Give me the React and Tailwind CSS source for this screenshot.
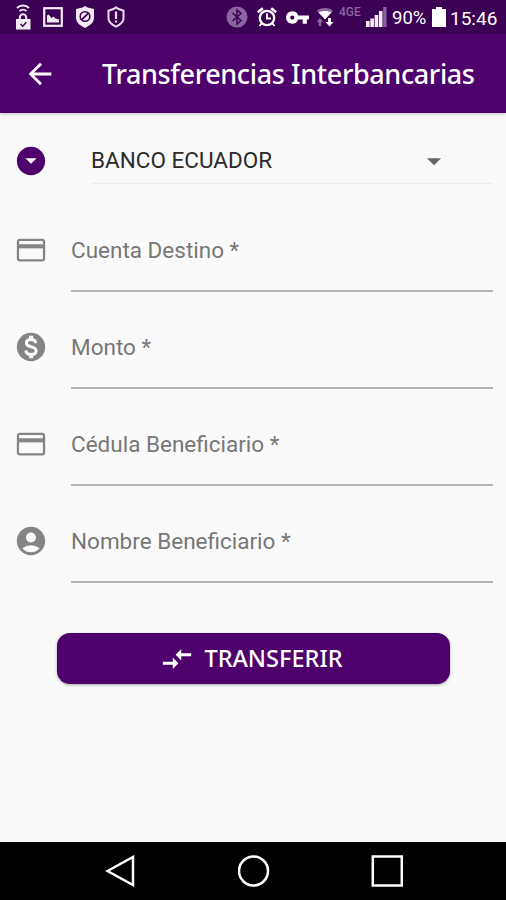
import { useState } from 'react';
import {
  MdAccountCircle,
  MdArrowBack,
  MdArrowDropDown,
  MdArrowDropDownCircle,
  MdCompareArrows,
  MdVpnKey,
} from 'react-icons/md';

const CardIcon = ({ className }) => (
  <svg className={className} viewBox="0 0 24 24" fill="none" stroke="currentColor">
    <rect x="2.800" y="4.800" width="18.400" height="14.500" rx="1.300" strokeWidth="1.600" />
    <path d="M3 9.400h18" strokeWidth="2.900" />
  </svg>
);

const MoneyIcon = ({ className }) => (
  <svg className={className} viewBox="0 0 24 24">
    <circle cx="12" cy="12" r="10" fill="currentColor" />
    <g fill="none" stroke="#fafafa">
      <path d="M15.400 9.300C15.200 7.500 14 6.700 12.100 6.700c-2 0-3.300 1-3.300 2.500 0 1.600 1.200 2.200 3.300 2.700s3.500 1.200 3.500 2.900c0 1.600-1.400 2.500-3.500 2.500-2.200 0-3.500-1-3.700-2.800" strokeWidth="2.200" />
      <path d="M12.100 4v2.500M12.100 17.500V20" strokeWidth="2.900" />
    </g>
  </svg>
);

const fields = [
  { name: 'cuenta', label: 'Cuenta Destino *', icon: CardIcon },
  { name: 'monto', label: 'Monto *', icon: MoneyIcon },
  { name: 'cedula', label: 'Cédula Beneficiario *', icon: CardIcon },
  { name: 'nombre', label: 'Nombre Beneficiario *', icon: MdAccountCircle },
];

const LockWifiIcon = () => (
  <svg width="16" height="26" viewBox="0 0 16 26" fill="none" stroke="#f1eaf5">
    <path d="M2 4C5 .6 11 .6 14 4M4.500 7.200c2-2 5-2 7 0" strokeWidth="1.900" />
    <path d="M4.800 16v-2.500a3.200 3.200 0 0 1 6.400 0V16" strokeWidth="2" />
    <rect x="1" y="15" width="14.500" height="10.500" fill="#f1eaf5" stroke="none" />
    <path d="M5.500 20l2.300 2.300 3.500-4" stroke="#3c0054" strokeWidth="1.400" />
  </svg>
);

const ImageIcon = () => (
  <svg width="20" height="20" viewBox="0 0 20 20">
    <rect x="1.200" y="1.200" width="17.600" height="17.600" fill="none" stroke="#f1eaf5" strokeWidth="2.200" />
    <path d="M4 15.500V8.500l1.500-1 3 3.500 2-1.500 2 2 3.500 1v3z" fill="#f1eaf5" />
  </svg>
);

const ShieldBlockIcon = () => (
  <svg width="20" height="22" viewBox="0 0 20 22">
    <path d="M10 0l2.500 1.600L19 3v9c0 4.500-4 7.500-9 10-5-2.500-9-5.500-9-10V3l6.500-1.400z" fill="#f1eaf5" />
    <circle cx="10" cy="10.500" r="4.800" fill="none" stroke="#3c0054" strokeWidth="1.600" />
    <path d="M6.800 13.700l6.400-6.400" stroke="#3c0054" strokeWidth="1.800" />
  </svg>
);

const ShieldAlertIcon = () => (
  <svg width="18" height="22" viewBox="0 0 18 22" fill="none" stroke="#e6dcec">
    <path d="M9 1.300l2 1.500 5.500 2v7.700c0 3.500-3 6-7.500 8.200-4.500-2.200-7.500-4.700-7.500-8.200V4.800l5.500-2z" strokeWidth="2" />
    <path d="M9 5.500v7.500M9 14.500v2" strokeWidth="2.200" />
  </svg>
);

const BluetoothIcon = () => (
  <svg width="22" height="22" viewBox="0 0 22 22">
    <circle cx="11" cy="11" r="10.500" fill="#8a65a0" />
    <path d="M6.500 7l8.500 7.500-4 3.500V4l4 3.500L6.500 15" fill="none" stroke="#3c0054" strokeWidth="1.500" />
  </svg>
);

const AlarmIcon = () => (
  <svg width="20" height="20" viewBox="0 0 20 20" fill="none" stroke="#fff">
    <circle cx="10" cy="11" r="7.200" strokeWidth="2.300" />
    <path d="M.8 5.200l5-4M19.200 5.200l-5-4" strokeWidth="2.600" />
    <path d="M10 6.500V11.500h4M4.500 16.500L2.500 19M15.500 16.500l2 2.500" strokeWidth="2" />
  </svg>
);

const WifiDataIcon = () => (
  <svg width="18" height="20" viewBox="0 0 18 20">
    <path d="M.8 3.500C6 .2 12 .2 17.200 3.500L15 6C11 4 7 4 3 6z" fill="#8a65a0" />
    <path d="M2.500 5.500c4-2 9-2 13 0L9 12.500z" fill="#fff" />
    <path d="M4 11l3.500 4H5.200v4H2.800v-4H.5z" fill="#8a65a0" />
    <path d="M13.500 19.500l-4-4.500h2.500v-4h3v4h2.500z" fill="#fff" />
  </svg>
);

const SignalIcon = () => (
  <svg width="21" height="20" viewBox="0 0 21 20" fill="#f1eaf5">
    <rect x="0" y="14" width="3.600" height="6" />
    <rect x="4.300" y="11.500" width="3.600" height="8.500" />
    <rect x="8.600" y="8" width="3.600" height="12" />
    <rect x="12.900" y="4" width="3.600" height="16" />
    <rect x="17.200" y="0" width="3.300" height="20" fill="#8a65a0" />
  </svg>
);

const BatteryIcon = () => (
  <svg width="14" height="20" viewBox="0 0 14 20" fill="#fff">
    <path d="M4 0h6v2h4v18H0V2h4z" />
  </svg>
);

function StatusBar() {
  return (
    <div className="flex h-[34px] shrink-0 items-center justify-between bg-[#3c0054] pl-[15px] pr-[8px] text-white">
      <div className="flex items-center gap-[12px]">
        <LockWifiIcon />
        <ImageIcon />
        <ShieldBlockIcon />
        <ShieldAlertIcon />
      </div>
      <div className="flex items-center whitespace-nowrap">
        <BluetoothIcon />
        <span className="ml-[9px]"><AlarmIcon /></span>
        <MdVpnKey className="ml-[8px] size-[25px]" />
        <span className="ml-[6px]"><WifiDataIcon /></span>
        <span className="mb-[11px] ml-[5px] w-[24px] text-[12px] leading-none font-medium text-[#8a65a0]">4GE</span>
        <span className="ml-[3px]"><SignalIcon /></span>
        <span className="mt-[3px] ml-[5px] w-[35px] text-[18.500px] leading-none">90%</span>
        <span className="ml-[5px]"><BatteryIcon /></span>
        <span className="mt-[2px] ml-[4px] w-[48px] text-[19px] leading-none">15:46</span>
      </div>
    </div>
  );
}

function AppBar() {
  return (
    <header className="z-10 flex h-[79px] shrink-0 items-center bg-[#4e006c] pl-[23px] text-white shadow-[0_1px_4px_rgba(0,0,0,0.22)]">
      <button type="button" aria-label="Volver">
        <MdArrowBack className="size-[34px]" />
      </button>
      <h1 className="ml-[45px] mt-[2px] whitespace-nowrap font-['Noto_Sans',sans-serif] text-[27px] font-medium tracking-[-0.38px]">
        Transferencias Interbancarias
      </h1>
    </header>
  );
}

function Field({ field, value, onChange }) {
  const Icon = field.icon;

  return (
    <label className="mb-[32px] flex h-[65px] pl-[14px]">
      <Icon className="mt-[6px] size-[34px] shrink-0 text-[#858585]" />
      <input
        name={field.name}
        value={value}
        onChange={onChange}
        placeholder={field.label}
        className="ml-[23px] min-w-0 flex-1 border-b-2 border-[#b4b4b4] pb-[16px] text-[22.500px] text-[#333] outline-none placeholder:text-[#777]"
      />
    </label>
  );
}

function NavBar() {
  return (
    <nav className="flex h-[58px] shrink-0 items-center bg-black pl-[105px]">
      <svg width="32" height="32" viewBox="0 0 32 32" fill="none" stroke="#fff" strokeWidth="2.500">
        <path d="M2.500 16L28 2v28z" />
      </svg>
      <svg className="ml-[101px]" width="32" height="32" viewBox="0 0 32 32" fill="none" stroke="#fff" strokeWidth="2.500">
        <circle cx="15.500" cy="16" r="14.500" />
      </svg>
      <svg className="ml-[101px]" width="32" height="32" viewBox="0 0 32 32" fill="none" stroke="#fff" strokeWidth="2.500">
        <rect x="1.800" y="1.500" width="29" height="29" />
      </svg>
    </nav>
  );
}

function App() {
  const [values, setValues] = useState({ cuenta: '', monto: '', cedula: '', nombre: '' });

  const handleChange = (e) => {
    setValues({ ...values, [e.target.name]: e.target.value });
  };

  return (
    <div className="flex h-[900px] w-[506px] flex-col overflow-hidden bg-[#fafafa] font-[Roboto,sans-serif]">
      <StatusBar />
      <AppBar />

      <main className="flex-1 pr-[13px]">
        {/* Bank selector */}
        <div className="flex h-[71px] items-end pl-[14px]">
          <MdArrowDropDownCircle className="mb-[6px] size-[34px] shrink-0 text-[#4e006c]" />
          <button
            type="button"
            className="ml-[43px] flex h-[46px] flex-1 items-center justify-between border-b border-[#ececec] pr-[42px] text-[22.500px] text-[#2b2b2b]"
          >
            BANCO ECUADOR
            <MdArrowDropDown className="size-[34px] text-[#666]" />
          </button>
        </div>

        <form className="mt-[43px]" onSubmit={(e) => e.preventDefault()}>
          {fields.map((field) => (
            <Field key={field.name} field={field} value={values[field.name]} onChange={handleChange} />
          ))}

          <button
            type="submit"
            className="ml-[57px] mt-[50px] flex h-[51px] w-[393px] items-center justify-center rounded-[13px] bg-[#4e006c] pr-[4px] font-['Noto_Sans',sans-serif] text-[23.500px] font-medium text-white shadow-[0_1px_3px_rgba(0,0,0,0.35)]"
          >
            <MdCompareArrows className="mr-[10px] size-[34px]" />
            TRANSFERIR
          </button>
        </form>
      </main>

      <NavBar />
    </div>
  );
}

export default App;
